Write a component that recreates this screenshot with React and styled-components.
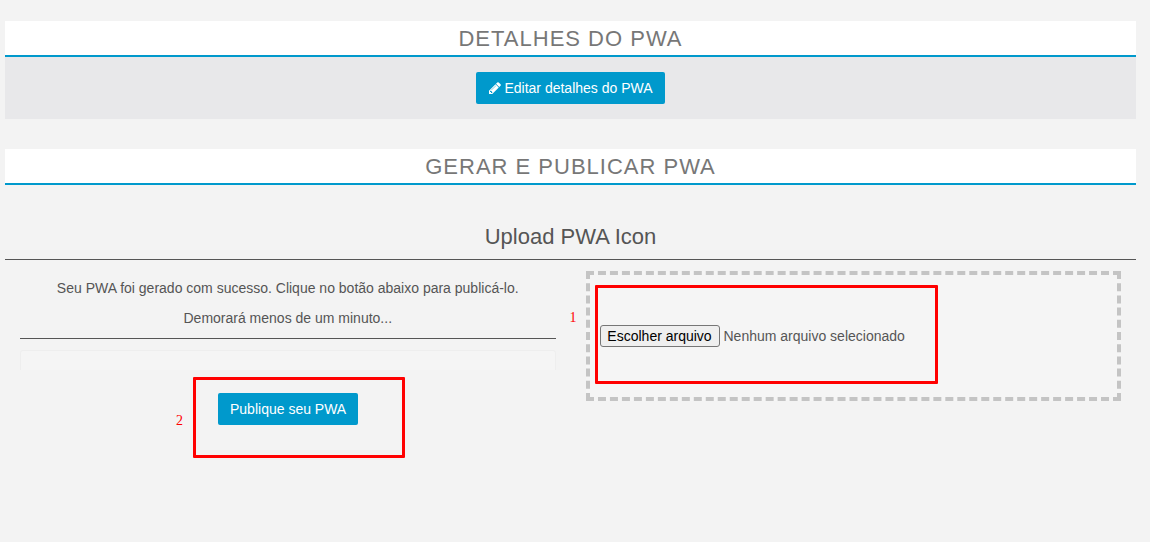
import React from 'react';
import styled, { createGlobalStyle } from 'styled-components';

const GlobalStyle = createGlobalStyle`
  html, body {
    margin: 0;
    background: #f3f3f3;
    font-family: "Liberation Sans", Arial, sans-serif;
    color: #555;
  }
  * { box-sizing: border-box; }
`;

const Page = styled.div`
  width: 1150px;
  height: 542px;
  padding: 21px 14px 0 5px;
  overflow: hidden;
`;

const SectionHeader = styled.h2`
  margin: 0;
  height: 36px;
  background: #fff;
  border-bottom: 2px solid #0099cc;
  color: #777;
  font-size: 22px;
  font-weight: 400;
  line-height: 36px;
  letter-spacing: 1px;
  text-align: center;
`;

const ActionBar = styled.div`
  height: 62px;
  margin-bottom: 30px;
  padding-top: 15px;
  background: #e8e8ea;
  display: flex;
  justify-content: center;
  align-items: flex-start;
`;

const Button = styled.button`
  height: 32px;
  padding: 0 12px;
  border: 0;
  border-radius: 2px;
  background: #0099cc;
  color: #fff;
  font-family: inherit;
  font-size: 14px;
  display: flex;
  align-items: center;
  gap: 2px;
`;

const PencilIcon = () => (
  <svg width="14" height="14" viewBox="0 0 1792 1792" fill="currentColor" aria-hidden="true">
    <path d="M491 1536l91-91-235-235-91 91v107h128v128h107zm523-928q0-22-22-22-10 0-17 7l-542 542q-7 7-7 17 0 22 22 22 10 0 17-7l542-542q7-7 7-17zm-54-192l416 416-832 832h-416v-416zm683 96q0 53-37 90l-166 166-416-416 166-165q36-38 90-38 53 0 91 38l235 234q37 39 37 91z" />
  </svg>
);

const UploadTitle = styled.h3`
  margin: 0;
  height: 75px;
  padding-top: 39px;
  border-bottom: 1px solid #555;
  color: #555;
  font-size: 22px;
  font-weight: 400;
  line-height: 26px;
  text-align: center;
`;

const Columns = styled.div`
  display: grid;
  grid-template-columns: 1fr 1fr;
`;

const Column = styled.div`
  position: relative;
  padding: ${p => p.$top}px 15px 0;
`;

const Message = styled.p`
  margin: 0 0 10px;
  font-size: 14px;
  line-height: 20px;
  text-align: center;
`;

const Rule = styled.hr`
  margin: 0 0 11px;
  border: 0;
  border-top: 1px solid #555;
`;

const ProgressWell = styled.div`
  height: 20px;
  border: 1px solid #eee;
  border-bottom: 0;
  border-radius: 3px 3px 0 0;
  background: #f5f5f5;
`;

const PublishRow = styled.div`
  margin-top: 23px;
  padding-left: 198px;
`;

const DropZone = styled.div`
  height: 130px;
  border: 4px dashed #c4c4c4;
  background: #f5f5f5;
  padding-left: 10px;
  display: flex;
  align-items: center;
  gap: 4px;
`;

const FilePicker = styled.button`
  height: 22px;
  width: 120px;
  padding: 0;
  border: 1px solid #767676;
  border-radius: 3px;
  background: #efefef;
  color: #000;
  font-family: inherit;
  font-size: 14px;
`;

const FileName = styled.span`
  font-size: 14px;
  color: #555;
`;

const Highlight = styled.div`
  position: absolute;
  left: ${p => p.$left}px;
  top: ${p => p.$top}px;
  width: ${p => p.$width}px;
  height: ${p => p.$height}px;
  border: 3px solid #ff0000;
  border-radius: 1px;
`;

const StepNumber = styled.span`
  position: absolute;
  left: ${p => p.$left}px;
  top: ${p => p.$top}px;
  color: #ff0000;
  font-family: "Liberation Serif", serif;
  font-size: 14px;
  line-height: 16px;
`;

export default function App() {
  return (
    <Page>
      <GlobalStyle />
      <SectionHeader>DETALHES DO PWA</SectionHeader>
      <ActionBar>
        <Button><PencilIcon />Editar detalhes do PWA</Button>
      </ActionBar>

      <SectionHeader>GERAR E PUBLICAR PWA</SectionHeader>
      <UploadTitle>Upload PWA Icon</UploadTitle>

      <Columns>
        <Column $top={18}>
          <Message>Seu PWA foi gerado com sucesso. Clique no botão abaixo para publicá-lo.</Message>
          <Message>Demorará menos de um minuto...</Message>
          <Rule />
          <ProgressWell />
          <PublishRow>
            <Button>Publique seu PWA</Button>
          </PublishRow>
          <Highlight $left={188} $top={117} $width={212} $height={81} />
          <StepNumber $left={171} $top={153}>2</StepNumber>
        </Column>
        <Column $top={11}>
          <DropZone>
            <FilePicker>Escolher arquivo</FilePicker>
            <FileName>Nenhum arquivo selecionado</FileName>
          </DropZone>
          <Highlight $left={24} $top={25} $width={343} $height={99} />
          <StepNumber $left={-1} $top={50}>1</StepNumber>
        </Column>
      </Columns>
    </Page>
  );
}
